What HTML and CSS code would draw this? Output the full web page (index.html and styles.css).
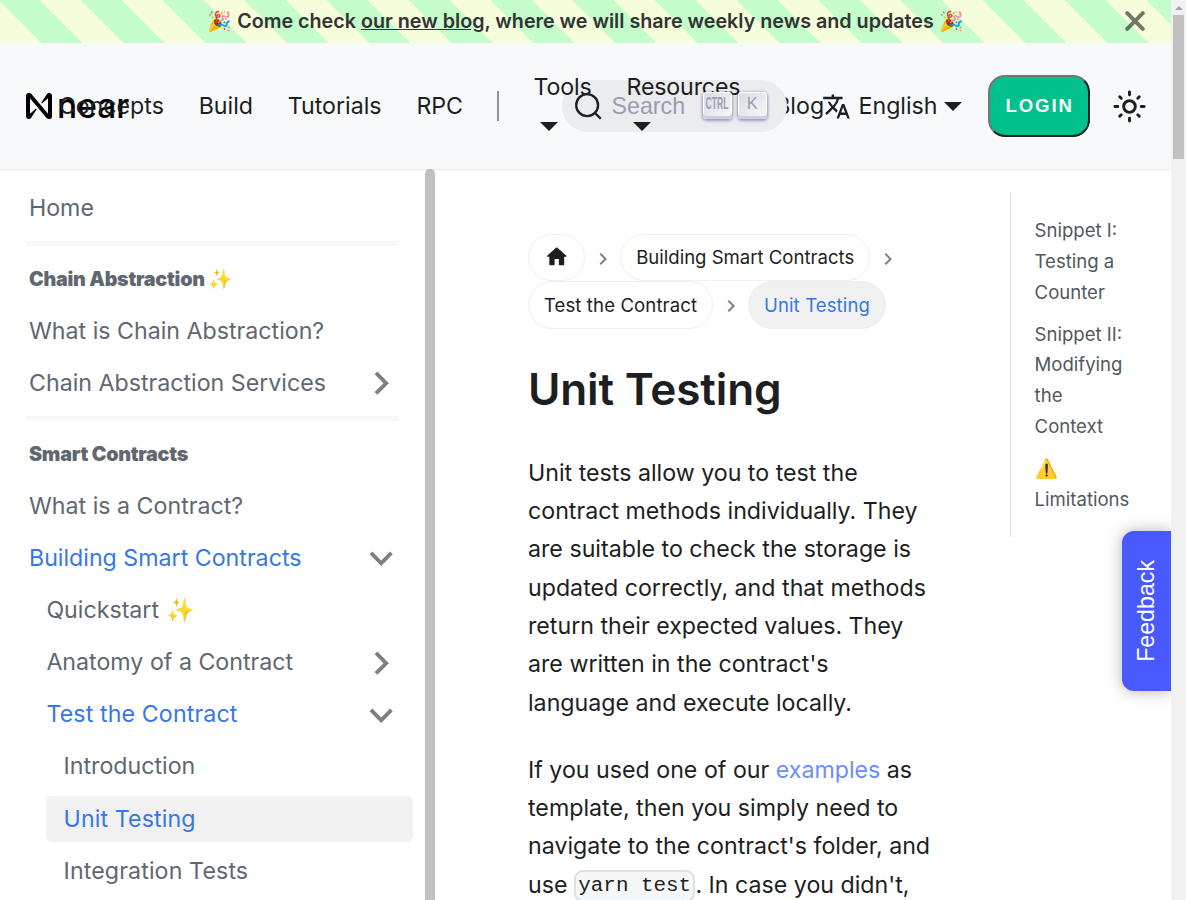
FILE: index.html
```
<!DOCTYPE html>
<html lang="en">
<head>
<meta charset="utf-8">
<title>Unit Testing | NEAR Documentation</title>
<link rel="stylesheet" href="styles.css">
</head>
<body>
<svg class="defs" aria-hidden="true">
  <symbol id="chev" viewBox="0 0 24 24"><path d="M7.41 15.41L12 10.83l4.59 4.58L18 14l-6-6-6 6z"/></symbol>
</svg>
<div class="page">
  <div class="announce">
    <div class="announce-text">🎉 Come check <a class="announce-link" href="#">our new blog</a>, where we will share weekly news and updates 🎉</div>
    <svg class="announce-close" viewBox="0 0 20 20"><path d="M2.2 2.2l15.6 15.6M17.8 2.2L2.2 17.8"/></svg>
  </div>
  <header class="navbar">
    <div class="nav-left">
      <a class="brand" href="#">
        <svg class="brand-mark" viewBox="0 0 90 90"><path d="M72.2 4.6L53.4 32.5c-1.3 1.9 1.2 4.2 3 2.6L74.9 19c.5-.4 1.2-.1 1.2.6v50.3c0 .7-.9 1-1.3.5l-56-67C17 1.2 14.4 0 11.5 0h-2C4.3 0 0 4.3 0 9.6v70.8C0 85.7 4.3 90 9.6 90c3.3 0 6.4-1.7 8.2-4.6l18.8-27.9c1.3-1.9-1.2-4.2-3-2.6l-18.5 16c-.5.4-1.2.1-1.2-.6V20.1c0-.7.9-1 1.3-.5l56 67c1.8 2.2 4.5 3.4 7.3 3.4h2c5.3 0 9.6-4.3 9.6-9.6V9.6c0-5.3-4.3-9.6-9.6-9.6-3.4 0-6.5 1.7-8.3 4.6z"/></svg>
        <span class="brand-name">near</span>
      </a>
      <a class="nav-link">Concepts</a>
      <a class="nav-link">Build</a>
      <a class="nav-link">Tutorials</a>
      <a class="nav-link">RPC</a>
      <span class="nav-divider"></span>
      <a class="nav-link nav-drop">Tools<span class="drop-arrow"></span></a>
      <a class="nav-link nav-drop">Resources<span class="drop-arrow"></span></a>
      <a class="nav-link">Blog</a>
    </div>
    <div class="nav-right">
      <div class="search">
        <svg class="search-icon" viewBox="0 0 20 20"><path d="M14.386 14.386l4.0877 4.0877-4.0877-4.0877c-2.9418 2.9419-7.7115 2.9419-10.6533 0-2.9419-2.9418-2.9419-7.7115 0-10.6533 2.9418-2.9419 7.7115-2.9419 10.6533 0 2.9419 2.9418 2.9419 7.7115 0 10.6533z"/></svg>
        <span class="search-label">Search</span>
        <span class="keys">
          <kbd class="key"><span class="key-narrow">CTRL</span></kbd>
          <kbd class="key">K</kbd>
        </span>
      </div>
      <a class="locale">
        <svg class="locale-icon" viewBox="0 0 24 24"><path d="M12.87 15.07l-2.54-2.51.03-.03c1.74-1.94 2.98-4.17 3.71-6.53H17V4h-7V2H8v2H1v1.99h11.17C11.5 7.92 10.44 9.75 9 11.35 8.07 10.32 7.3 9.19 6.69 8h-2c.73 1.63 1.73 3.17 2.98 4.56l-5.09 5.02L4 19l5-5 3.11 3.11.76-2.04zM18.5 10h-2L12 22h2l1.12-3h4.75L21 22h2l-4.5-12zm-2.62 7l1.62-4.33L19.12 17h-3.24z"/></svg>
        <span>English</span><span class="drop-arrow"></span>
      </a>
      <button class="login">LOGIN</button>
      <svg class="sun" viewBox="0 0 24 24"><circle cx="12" cy="12" r="4"/><path d="M2 12h2M20 12h2M12 2v2M12 20v2M5.28 5.28l1.06 1.06M17.66 17.66l1.06 1.06M18.72 5.28l-1.06 1.06M6.34 17.66l-1.06 1.06"/></svg>
    </div>
  </header>
  <div class="layout">
    <aside class="sidebar">
      <nav class="menu">
        <a class="item">Home</a>
        <hr class="rule">
        <div class="item heading">Chain Abstraction ✨</div>
        <a class="item">What is Chain Abstraction?</a>
        <a class="item">Chain Abstraction Services<svg class="caret closed"><use href="#chev"/></svg></a>
        <hr class="rule">
        <div class="item heading">Smart Contracts</div>
        <a class="item">What is a Contract?</a>
        <a class="item active">Building Smart Contracts<svg class="caret open"><use href="#chev"/></svg></a>
        <div class="sub">
          <a class="item">Quickstart ✨</a>
          <a class="item">Anatomy of a Contract<svg class="caret closed"><use href="#chev"/></svg></a>
          <a class="item active wide">Test the Contract<svg class="caret open"><use href="#chev"/></svg></a>
          <div class="sub">
            <a class="item">Introduction</a>
            <a class="item active current wide">Unit Testing</a>
            <a class="item wide">Integration Tests</a>
          </div>
        </div>
      </nav>
      <div class="sidebar-thumb"></div>
    </aside>
    <main class="doc">
      <div class="crumbs">
        <a class="crumb"><svg class="home" viewBox="0 0 24 24"><path d="M10 19v-5h4v5c0 .55.45 1 1 1h3c.55 0 1-.45 1-1v-7h1.7c.46 0 .68-.57.33-.87L12.67 3.6c-.38-.34-.96-.34-1.34 0l-8.36 7.53c-.34.3-.13.87.33.87H5v7c0 .55.45 1 1 1h3c.55 0 1-.45 1-1z"/></svg></a>
        <svg class="sep"><use href="#chev"/></svg>
        <a class="crumb">Building Smart Contracts</a>
        <svg class="sep"><use href="#chev"/></svg>
        <a class="crumb wide">Test the Contract</a>
        <svg class="sep"><use href="#chev"/></svg>
        <span class="crumb crumb-current wide">Unit Testing</span>
      </div>
      <h1 class="title">Unit Testing</h1>
      <p class="para">Unit tests allow you to test the contract methods individually. They are suitable to check the storage is updated correctly, and that methods return their expected values. They are written in the contract's language and execute locally.</p>
      <p class="para">If you used one of our <a class="link" href="#">examples</a> as template, then you simply need to navigate to the contract's folder, and use <code class="code">yarn test</code>. In case you didn't,</p>
    </main>
    <aside class="toc">
      <a class="toc-item">Snippet I: Testing a Counter</a>
      <a class="toc-item">Snippet II: Modifying the Context</a>
      <a class="toc-item">⚠️ Limitations</a>
    </aside>
  </div>
  <div class="feedback"><span class="feedback-text">Feedback</span></div>
</div>
<div class="scrollbar"><span class="scroll-up"></span><span class="scroll-thumb"></span></div>
</body>
</html>
```
FILE: styles.css
```
* { box-sizing: border-box; }
html { font-size: 23.2px; }
body {
  margin: 0;
  height: 900px;
  overflow: hidden;
  display: flex;
  font-family: Inter, sans-serif;
  line-height: 1.65;
  color: #1c1e21;
  background: #fff;
}
a { color: inherit; text-decoration: none; }
.defs { display: none; }
.page {
  position: relative;
  flex: 0 0 1171px;
  height: 900px;
  overflow: hidden;
  display: flex;
  flex-direction: column;
}

/* announcement */
.announce {
  flex: 0 0 43px;
  display: flex;
  align-items: center;
  padding-right: 26px;
  background: repeating-linear-gradient(45deg, #f5fddb, #f5fddb 29px, #c4fccb 29px, #c4fccb 58px);
  font-size: 19.72px;
  font-weight: 600;
  color: #333;
}
.announce-text { flex: 1; text-align: center; white-space: nowrap; padding-left: 46px; }
.announce-link { text-decoration: underline; }
.announce-close {
  width: 20px;
  height: 20px;
  margin-bottom: 1px;
  fill: none;
  stroke: #000;
  stroke-opacity: .53;
  stroke-width: 4;
  stroke-linecap: round;
}

/* navbar */
.navbar {
  position: relative;
  z-index: 2;
  flex: 0 0 126px;
  display: flex;
  align-items: center;
  padding: 0 23.2px 0 26px;
  background: #f8f9fb;
  box-shadow: 0 1px 2px 0 rgba(0, 0, 0, .1);
}
.nav-left { flex: 0 0 536px; width: 536px; display: flex; align-items: center; }
.brand { flex: 0 0 15.4px; width: 15.4px; display: flex; align-items: center; white-space: nowrap; color: #000; }
.brand-mark { flex: none; width: 26px; height: 26px; }
.brand-name { margin-left: 5px; font-size: 33.5px; font-weight: 550; line-height: 26px; }
.nav-link { flex: none; padding: 0 17.4px; white-space: nowrap; }
.nav-divider { flex: none; width: 2px; height: 30px; margin: 0 17.2px 0 16.6px; background: #909296; }
.nav-drop { position: relative; z-index: 2; display: flex; flex-direction: column; letter-spacing: -.15px; }
.drop-arrow {
  display: inline-block;
  border: 9.28px solid transparent;
  border-top-color: currentColor;
  border-bottom: 0;
}
.nav-drop .drop-arrow { width: 0; margin: 16px 0 13px 6.5px; }
.nav-right { flex: 1; display: flex; align-items: center; }
.search {
  position: relative;
  flex: 0 0 224.5px;
  height: 52px;
  display: flex;
  align-items: center;
  padding: 0 18px 0 11.6px;
  border-radius: 26px;
  background: #ebecf0;
  color: #969faf;
  font-family: "Liberation Sans", sans-serif;
}
.search-icon { width: 29px; height: 29px; fill: none; stroke: #1c1e21; stroke-width: 1.6; stroke-linecap: round; }
.search-label { margin-left: 9px; }
.keys { position: absolute; z-index: 4; right: 19.5px; top: 12px; display: flex; gap: 5.5px; }
.key {
  width: 29.5px;
  height: 26.5px;
  display: flex;
  align-items: center;
  justify-content: center;
  padding-bottom: 5px;
  border-radius: 4px;
  font: 16.5px/1 "Liberation Sans", sans-serif;
  color: #969faf;
  background: linear-gradient(-225deg, #d5dbe4, #f8f8f8);
  box-shadow: inset 0 -3px 0 0 #cdcde6, inset 0 0 1px 1px #fff, 0 1px 3px 1px rgba(30, 35, 90, .4);
}
.key-narrow { flex: none; font-weight: 700; font-size: 15px; transform: scale(.57, 1.1); }
.locale { display: flex; align-items: center; margin-left: 35px; }
.locale-icon { width: 29px; height: 29px; margin-right: 8px; fill: #1c1e21; }
.locale .drop-arrow { margin-left: 6.6px; }
.login {
  width: 102px;
  height: 62px;
  margin-left: 26px;
  padding: 0 0 0 1px;
  border: 2px solid;
  border-color: #767676 #212121 #212121 #767676;
  border-radius: 17px;
  background: #00c08b;
  color: #fff;
  font: 700 18.56px "Liberation Sans", sans-serif;
  letter-spacing: 1.9px;
}
.sun { width: 35px; height: 35px; margin-left: 22px; fill: none; stroke: #1c1e21; stroke-width: 2; stroke-linecap: round; }

/* body layout */
.layout { flex: 1; min-height: 0; display: flex; align-items: stretch; }
.sidebar { flex: 0 0 435px; display: flex; justify-content: space-between; overflow: hidden; }
.sidebar-thumb { width: 10px; background: #c1c1c1; border-radius: 5px 5px 0 0; }
.menu { width: 413px; padding-top: 16.4px; }
.item {
  display: flex;
  align-items: center;
  height: 46.4px;
  margin: 0 0 5.7px 11.6px;
  padding: 0 8.3px 0 17.4px;
  line-height: 1.25;
  color: #606770;
  border-radius: 5.8px;
  white-space: nowrap;
}
.heading { font-size: 19.72px; font-weight: 900; letter-spacing: -.26px; }
.rule { height: 5px; margin: 9px 14px 10.5px 26px; border: 0; background: #f8f8f8; }
.sub { padding-left: 17.4px; }
.wide { letter-spacing: .12px; }
.active { color: #3578e5; }
.current { background: #f1f1f1; }
.sub .sub .item { margin-left: 11.4px; }
.caret { width: 46.4px; height: 46.4px; margin-left: auto; fill: #7f7f7f; }
.closed { transform: rotate(90deg); }
.open { transform: rotate(180deg); }

.doc { flex: 0 0 575px; padding: 65px 75px 0 93px; }
.crumbs { display: flex; flex-wrap: wrap; align-items: center; margin-right: -20px; font-size: 18.56px; }
.crumb {
  display: flex;
  align-items: center;
  height: 47.4px;
  padding: 0 14.85px;
  border: 1px solid #eee;
  border-radius: 24px;
  white-space: nowrap;
}
.crumb-current { background: #f1f1f1; color: #3578e5; }
.home { width: 25.5px; height: 25.5px; fill: #1c1e21; position: relative; top: -1px; }
.sep { width: 24px; height: 24px; margin: 2px 5.6px 0; fill: #7f7f7f; transform: rotate(90deg); }
.title { margin: 33px 0 37px; font-size: 44.08px; font-weight: 600; line-height: 1.25; letter-spacing: -.15px; }
.para { margin: 0 0 29px; }
.link { color: #6a8eff; }
.code {
  padding: 2.32px;
  border: 2px solid #dfe0e2;
  border-radius: 9px;
  background: #f6f7f8;
  font: 20.88px "Liberation Mono", monospace;
  vertical-align: 1px;
}

.toc {
  align-self: flex-start;
  width: 125px;
  margin-top: 23.2px;
  padding: 23.2px 0 23.2px 23.6px;
  border-left: 1px solid #dadde1;
  display: flex;
  flex-direction: column;
  gap: 11.6px;
  font-size: 18.56px;
  color: #525860;
}

.feedback {
  position: absolute;
  right: 0;
  top: 530.5px;
  width: 49.5px;
  height: 160px;
  display: flex;
  align-items: center;
  justify-content: center;
  border-radius: 12px 0 0 12px;
  background: #485aff;
  color: #fff;
  font: 23.2px/1 "Liberation Sans", sans-serif;
  box-shadow: 0 0 16px rgba(0, 0, 0, .3);
}
.feedback-text { writing-mode: vertical-rl; transform: rotate(180deg); }

/* page scrollbar */
.scrollbar { width: 15px; height: 900px; background: #f1f1f1; display: flex; flex-direction: column; align-items: center; }
.scroll-up { margin-top: 6px; border: 4px solid transparent; border-top: 0; border-bottom-color: #a3a3a3; }
.scroll-thumb { width: 11px; height: 144px; margin-top: 5px; background: #c1c1c1; }
```
